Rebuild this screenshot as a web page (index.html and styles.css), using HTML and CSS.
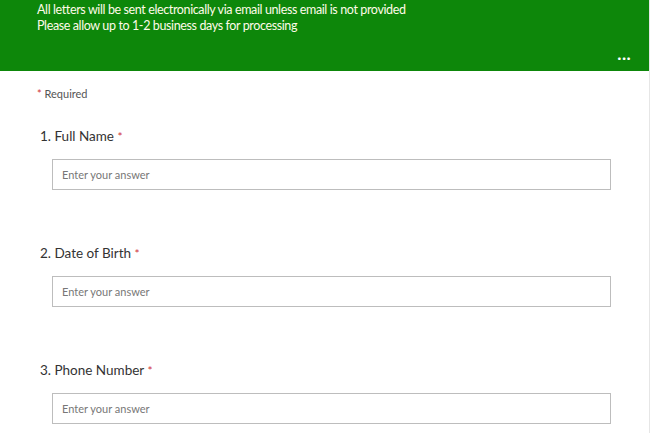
FILE: index.html
```html
<!DOCTYPE html>
<html lang="en">
<head>
    <meta charset="UTF-8">
    <title>Letter Request</title>
    <link rel="stylesheet" href="styles.css">
</head>
<body>
    <div class="page">
        <div class="header">
            <p>All letters will be sent electronically via email unless email is not provided</p>
            <p>Please allow up to 1-2 business days for processing</p>
            <div class="more">&middot;&middot;&middot;</div>
        </div>

        <div class="form-body">
            <div class="required-note"><span class="star">*</span> Required</div>

            <div class="question">
                <div class="question-title">1. Full Name <span class="star">*</span></div>
                <input type="text" class="answer" placeholder="Enter your answer">
            </div>

            <div class="question">
                <div class="question-title">2. Date of Birth <span class="star">*</span></div>
                <input type="text" class="answer" placeholder="Enter your answer">
            </div>

            <div class="question">
                <div class="question-title">3. Phone Number <span class="star">*</span></div>
                <input type="text" class="answer" placeholder="Enter your answer">
            </div>
        </div>
    </div>
</body>
</html>
```

FILE: styles.css
```css
body {
    margin: 0;
    font-family: 'Lato', sans-serif;
    background: #ffffff;
    color: #333333;
    overflow: hidden;
}

.page {
    width: 649px;
    height: 433px;
    overflow: hidden;
    border-right: 1px solid #e6e6e6;
}

.header {
    position: relative;
    height: 71px;
    box-sizing: border-box;
    padding: 2px 0 0 37px;
    background: #0d870a;
    color: #fffbe8;
}

.header p {
    margin: 0;
    font-size: 12.5px;
    letter-spacing: -0.38px;
    line-height: 16px;
}

.more {
    position: absolute;
    right: 18px;
    top: 48px;
    font-size: 18px;
    color: #ffffff;
    line-height: 18px;
}

.form-body {
    padding: 16px 0 0 37px;
}

.required-note {
    font-size: 11px;
    color: #555555;
    line-height: 14px;
}

.star {
    color: #d13438;
}

.question {
    margin-bottom: 54px;
}

.question-title {
    margin: 26px 0 0 3px;
    font-size: 13.5px;
    line-height: 18px;
    color: #333333;
}

.question-title .star {
    font-size: 12px;
}

.answer {
    display: block;
    box-sizing: border-box;
    width: 559px;
    height: 31px;
    margin: 13px 0 0 15px;
    padding: 0 9px;
    border: 1px solid #bdbdbd;
    font-family: 'Lato', sans-serif;
    font-size: 11px;
    color: #333333;
    outline: none;
}

.answer::placeholder {
    color: #777777;
}

.question + .question .question-title {
    margin-top: 0;
}
```
